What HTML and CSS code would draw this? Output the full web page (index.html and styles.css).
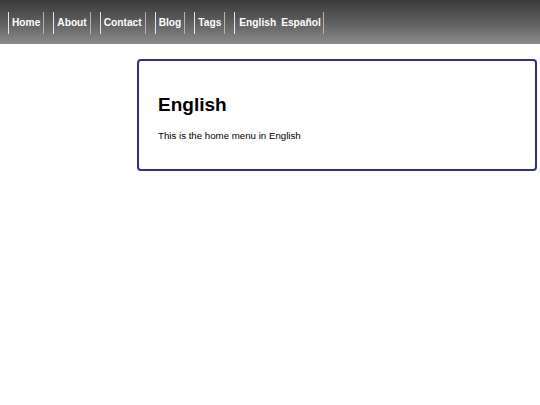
FILE: index.html
```html
<!DOCTYPE html>
<html lang="en">
<head>
<meta charset="utf-8">
<title>English</title>
<link rel="stylesheet" href="styles.css">
</head>
<body>
<header class="topbar">
  <ul class="nav">
    <li class="nav-item"><a href="#">Home</a></li>
    <li class="nav-item"><a href="#">About</a></li>
    <li class="nav-item"><a href="#">Contact</a></li>
    <li class="nav-item"><a href="#">Blog</a></li>
    <li class="nav-item"><a href="#">Tags</a></li>
    <li class="nav-item nav-lang"><a href="#">English</a> <a href="#">Español</a></li>
  </ul>
</header>
<main class="layout">
  <aside class="sidebar"></aside>
  <section class="card">
    <h1 class="card-title">English</h1>
    <p class="card-text">This is the home menu in English</p>
  </section>
</main>
</body>
</html>
```
FILE: styles.css
```css
html, body {
  margin: 0;
  padding: 0;
  background: #ffffff;
  font-family: "Liberation Sans", Arial, sans-serif;
  color: #000000;
}

.topbar {
  height: 44px;
  background: linear-gradient(to bottom, #3a3a3a 0%, #5e5e5e 50%, #8a8a8a 100%);
  display: flex;
  align-items: center;
}

.nav {
  list-style: none;
  margin: 0;
  padding: 0 0 0 8px;
  display: flex;
  gap: 9px;
  align-items: center;
}

.nav-item {
  border-left: 1px solid #e4e4e4;
  border-right: 1px solid #b4b4b4;
  padding: 0 3px;
  height: 22px;
  display: flex;
  align-items: center;
  gap: 5px;
  margin-top: 1px;
}

.nav-lang {
  padding: 0 2px 0 4px;
}

.nav-item a {
  color: #ffffff;
  text-decoration: none;
  font-weight: bold;
  font-size: 10.2px;
  line-height: 12px;
}

.layout {
  display: flex;
  padding: 15px 3px 0 0;
}

.sidebar {
  width: 137px;
  flex: 0 0 137px;
}

.card {
  flex: 1;
  border: 2px solid #2f2f88;
  border-radius: 4px;
  padding: 0 19px 27px 19px;
}

.card-title {
  margin: 33px 0 0 0;
  font-size: 19px;
  line-height: 22px;
  font-weight: bold;
}

.card-text {
  margin: 14px 0 0 0;
  font-size: 9.7px;
  line-height: 12px;
}
```
